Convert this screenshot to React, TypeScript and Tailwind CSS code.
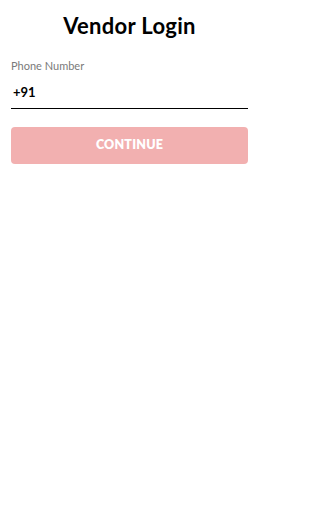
import React from "react";

export default function App() {
  return (
    <div className="w-[259px] h-[512px] bg-white flex flex-col px-[11px]" style={{ fontFamily: "Lato, 'Liberation Sans', sans-serif" }}>
      <h1 className="text-center text-[22px] leading-none font-bold text-black mt-[15px] tracking-[0.3px]">Vendor Login</h1>
      <label className="mt-[23px] text-[11px] leading-none text-[#7a7a7a]">Phone Number</label>
      <div className="mt-[15px] pl-[2px] text-[13px] leading-none font-bold text-black">+91</div>
      <div className="mt-[9px] h-px bg-black" />
      <button className="mt-[18px] h-[37px] w-full rounded-[4px] bg-[#f2b0b0] text-white text-[12.5px] font-extrabold tracking-[0.2px]">CONTINUE</button>
    </div>
  );
}
